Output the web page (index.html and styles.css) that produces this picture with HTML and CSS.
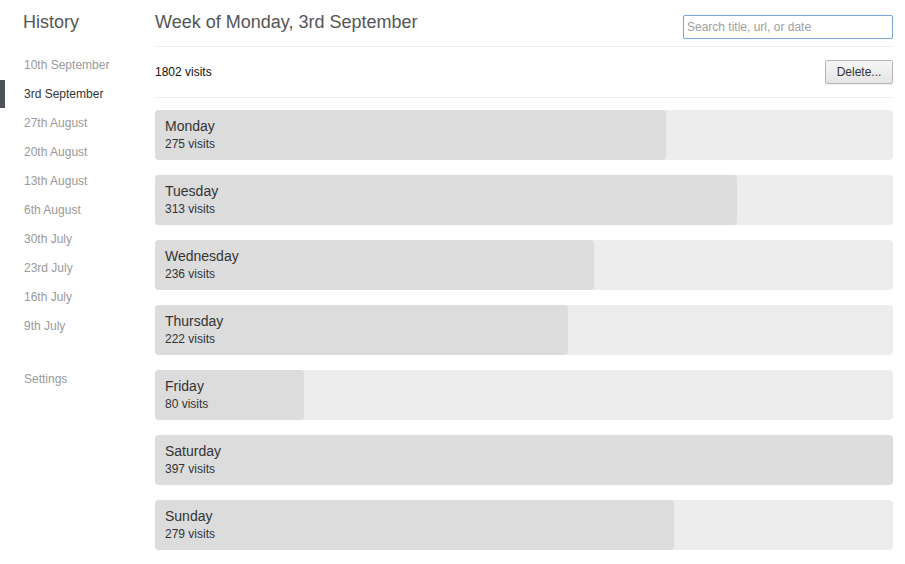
FILE: index.html
```html
<!DOCTYPE html>
<html lang="en">
<head>
<meta charset="utf-8">
<title>History</title>
<link rel="stylesheet" href="styles.css">
</head>
<body>
<div class="page">
  <nav class="sidebar">
    <h1 class="side-title">History</h1>
    <ul class="weeks">
      <li class="week">10th September</li>
      <li class="week active">3rd September</li>
      <li class="week">27th August</li>
      <li class="week">20th August</li>
      <li class="week">13th August</li>
      <li class="week">6th August</li>
      <li class="week">30th July</li>
      <li class="week">23rd July</li>
      <li class="week">16th July</li>
      <li class="week">9th July</li>
    </ul>
    <div class="week settings">Settings</div>
  </nav>
  <main class="main">
    <header class="header">
      <h2 class="main-title">Week of Monday, 3rd September</h2>
      <input class="search" type="text" placeholder="Search title, url, or date" autofocus>
    </header>
    <div class="summary">
      <span class="total">1802 visits</span>
      <button class="delete">Delete...</button>
    </div>
    <div class="days">
      <div class="day"><div class="fill" style="width:69.27%"></div><div class="label"><div class="name">Monday</div><div class="count">275 visits</div></div></div>
      <div class="day"><div class="fill" style="width:78.84%"></div><div class="label"><div class="name">Tuesday</div><div class="count">313 visits</div></div></div>
      <div class="day"><div class="fill" style="width:59.45%"></div><div class="label"><div class="name">Wednesday</div><div class="count">236 visits</div></div></div>
      <div class="day"><div class="fill" style="width:55.92%"></div><div class="label"><div class="name">Thursday</div><div class="count">222 visits</div></div></div>
      <div class="day"><div class="fill" style="width:20.15%"></div><div class="label"><div class="name">Friday</div><div class="count">80 visits</div></div></div>
      <div class="day"><div class="fill" style="width:100%"></div><div class="label"><div class="name">Saturday</div><div class="count">397 visits</div></div></div>
      <div class="day"><div class="fill" style="width:70.28%"></div><div class="label"><div class="name">Sunday</div><div class="count">279 visits</div></div></div>
    </div>
  </main>
</div>
</body>
</html>
```
FILE: styles.css
```css
html, body {
  margin: 0;
  padding: 0;
  background: #fff;
  font-family: "Liberation Sans", Arial, sans-serif;
  color: #333;
}
.page {
  display: flex;
  align-items: flex-start;
}
.sidebar {
  width: 155px;
  flex: none;
  padding-top: 11px;
}
.side-title {
  margin: 0 0 18px 23px;
  font-size: 18px;
  line-height: 22px;
  font-weight: normal;
  color: #555;
}
.weeks {
  list-style: none;
  margin: 0;
  padding: 0;
}
.week {
  height: 29px;
  line-height: 29px;
  padding-left: 24px;
  font-size: 12px;
  color: #999;
  position: relative;
}
.week.active {
  color: #333;
}
.week.active::before {
  content: "";
  position: absolute;
  left: 0;
  top: 0;
  width: 5px;
  height: 28px;
  background: #4c525a;
}
.settings {
  margin-top: 24px;
}
.main {
  flex: 1;
  margin-right: 12px;
}
.header {
  display: flex;
  justify-content: space-between;
  align-items: flex-start;
  padding-top: 11px;
  height: 35px;
  border-bottom: 1px solid #eee;
}
.main-title {
  margin: 0;
  font-size: 18px;
  line-height: 22px;
  font-weight: normal;
  color: #555;
}
.search {
  margin-top: 4px;
  box-sizing: border-box;
  width: 210px;
  height: 24px;
  border: 1px solid #7ea5d8;
  border-radius: 2px;
  padding: 0 3px;
  font-family: "Liberation Sans", Arial, sans-serif;
  font-size: 12px;
  color: #333;
  outline: none;
  box-shadow: 0 0 1px #a9c4e8;
}
.search::placeholder {
  color: #a0a0a0;
}
.summary {
  height: 50px;
  display: flex;
  justify-content: space-between;
  align-items: center;
  border-bottom: 1px solid #eee;
}
.total {
  font-size: 12px;
  color: #111;
}
.delete {
  box-sizing: border-box;
  height: 24px;
  width: 68px;
  padding: 0;
  font-family: "Liberation Sans", Arial, sans-serif;
  font-size: 12px;
  color: #333;
  border: 1px solid #b5b5b5;
  border-radius: 2px;
  background: linear-gradient(#f6f6f6, #e4e4e4);
  box-shadow: 0 1px 0 rgba(0,0,0,0.05);
}
.days {
  display: flex;
  flex-direction: column;
  gap: 15px;
  padding-top: 12px;
}
.day {
  position: relative;
  height: 50px;
  background: #ededed;
  border-radius: 4px;
}
.fill {
  position: absolute;
  left: 0;
  top: 0;
  bottom: 0;
  background: #dcdcdc;
  border-radius: 4px;
}
.label {
  position: relative;
  padding: 8px 0 0 10px;
}
.name {
  font-size: 14px;
  line-height: 17px;
  color: #333;
}
.count {
  margin-top: 2px;
  font-size: 12px;
  line-height: 15px;
  color: #333;
}
```
